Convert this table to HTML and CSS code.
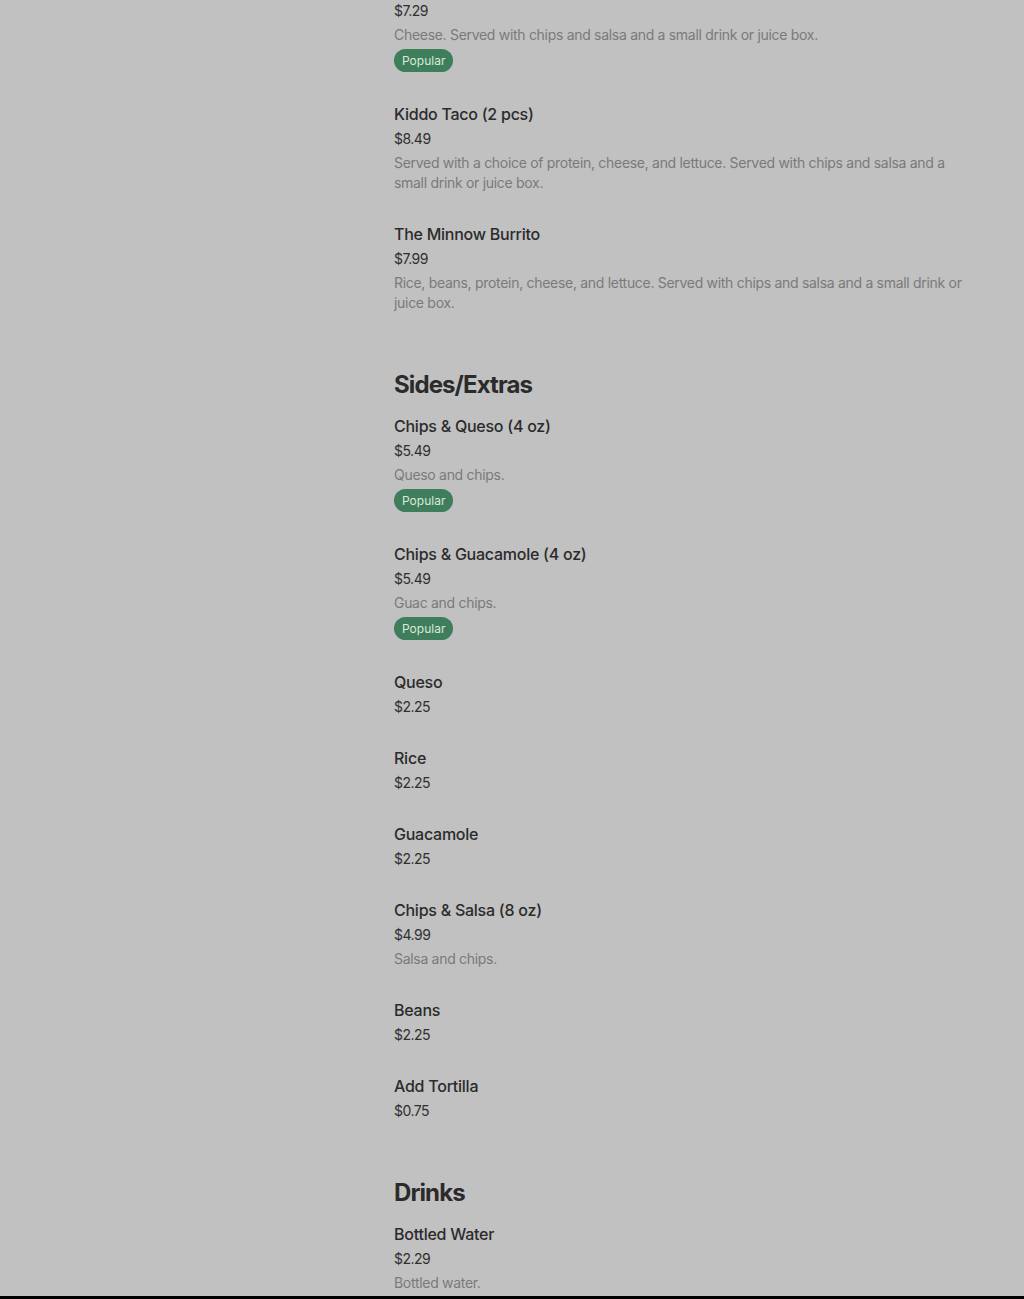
FILE: index.html
```html
<!DOCTYPE html>
<html lang="en">
<head>
<meta charset="utf-8">
<title>Menu</title>
<link rel="stylesheet" href="styles.css">
</head>
<body>
<div class="screen">
  <main class="menu">
    <section class="section first">
      <div class="item">
        <h3 class="item-title">Kiddo Quesadilla</h3>
        <div class="item-price">$7.29</div>
        <p class="item-desc">Cheese. Served with chips and salsa and a small drink or juice box.</p>
        <span class="badge">Popular</span>
      </div>
      <div class="item">
        <h3 class="item-title">Kiddo Taco (2 pcs)</h3>
        <div class="item-price">$8.49</div>
        <p class="item-desc">Served with a choice of protein, cheese, and lettuce. Served with chips and salsa and a small drink or juice box.</p>
      </div>
      <div class="item">
        <h3 class="item-title">The Minnow Burrito</h3>
        <div class="item-price">$7.99</div>
        <p class="item-desc">Rice, beans, protein, cheese, and lettuce. Served with chips and salsa and a small drink or juice box.</p>
      </div>
    </section>

    <section class="section">
      <h2 class="section-title">Sides/Extras</h2>
      <div class="item">
        <h3 class="item-title">Chips &amp; Queso (4 oz)</h3>
        <div class="item-price">$5.49</div>
        <p class="item-desc">Queso and chips.</p>
        <span class="badge">Popular</span>
      </div>
      <div class="item">
        <h3 class="item-title">Chips &amp; Guacamole (4 oz)</h3>
        <div class="item-price">$5.49</div>
        <p class="item-desc">Guac and chips.</p>
        <span class="badge">Popular</span>
      </div>
      <div class="item">
        <h3 class="item-title">Queso</h3>
        <div class="item-price">$2.25</div>
      </div>
      <div class="item">
        <h3 class="item-title">Rice</h3>
        <div class="item-price">$2.25</div>
      </div>
      <div class="item">
        <h3 class="item-title">Guacamole</h3>
        <div class="item-price">$2.25</div>
      </div>
      <div class="item">
        <h3 class="item-title">Chips &amp; Salsa (8 oz)</h3>
        <div class="item-price">$4.99</div>
        <p class="item-desc">Salsa and chips.</p>
      </div>
      <div class="item">
        <h3 class="item-title">Beans</h3>
        <div class="item-price">$2.25</div>
      </div>
      <div class="item">
        <h3 class="item-title">Add Tortilla</h3>
        <div class="item-price">$0.75</div>
      </div>
    </section>

    <section class="section">
      <h2 class="section-title">Drinks</h2>
      <div class="item">
        <h3 class="item-title">Bottled Water</h3>
        <div class="item-price">$2.29</div>
        <p class="item-desc">Bottled water.</p>
      </div>
    </section>
  </main>
</div>
</body>
</html>
```

FILE: styles.css
```css
html {
  background: #000;
}
body {
  margin: 0;
  font-family: "Inter", "Roboto", "Liberation Sans", sans-serif;
}
.screen {
  height: 1296px;
  overflow: hidden;
  background: #c1c1c1;
}
.menu {
  width: 576px;
  margin: -26px 0 0 394px;
  display: flex;
  flex-direction: column;
}
.section {
  display: flex;
  flex-direction: column;
  margin-top: 27px;
}
.section.first {
  margin-top: 0;
}
.section-title {
  margin: 0 0 13px;
  font-size: 24px;
  line-height: 32px;
  font-weight: 700;
  color: #2b2b2b;
  letter-spacing: -0.9px;
}
.item {
  display: flex;
  flex-direction: column;
  align-items: flex-start;
  padding-bottom: 29px;
}
.item-title {
  margin: 0;
  font-size: 16px;
  line-height: 24px;
  font-weight: 500;
  color: #2b2b2b;
  letter-spacing: -0.25px;
}
.item-price {
  margin-top: 3px;
  font-size: 14px;
  line-height: 20px;
  color: #2f2f2f;
  letter-spacing: -0.5px;
}
.item-desc {
  margin: 4px 0 0;
  font-size: 14px;
  line-height: 20px;
  color: #7a7a7a;
  letter-spacing: -0.3px;
}
.badge {
  margin-top: 4px;
  margin-bottom: 1px;
  height: 23px;
  line-height: 23px;
  padding: 0 8px;
  border-radius: 12px;
  background: #3e7e5b;
  color: #dbe9df;
  font-size: 12px;
}
```
